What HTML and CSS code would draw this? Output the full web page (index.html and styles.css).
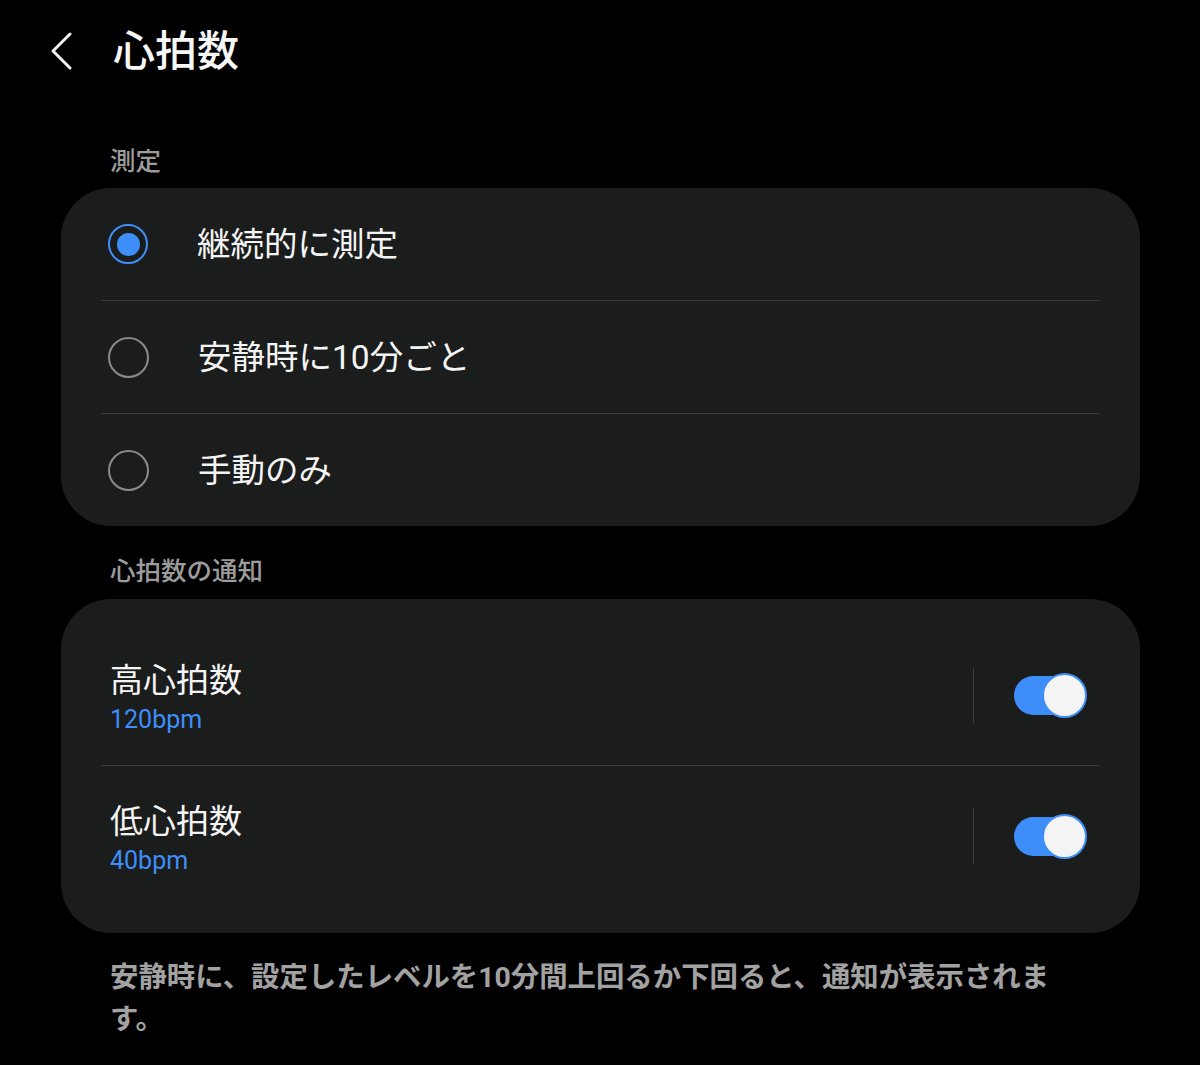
FILE: index.html
```html
<!DOCTYPE html>
<html lang="ja">
<head>
    <meta charset="UTF-8">
    <meta name="viewport" content="width=device-width, initial-scale=1.0">
    <title>心拍数</title>
    <link rel="stylesheet" href="styles.css">
</head>
<body>
    <div class="header">
        <a class="back" href="#">
            <svg width="24" height="40" viewBox="0 0 24 40">
                <polyline points="20,2 3,19 20,36" fill="none" stroke="#f2f2f2" stroke-width="3" stroke-linecap="round" stroke-linejoin="round"/>
            </svg>
        </a>
        <h1>心拍数</h1>
    </div>

    <div class="main">
        <h2 class="label first">測定</h2>
        <div class="card">
            <div class="radio-row">
                <span class="radio checked"></span>
                <span class="radio-text">継続的に測定</span>
            </div>
            <div class="divider"></div>
            <div class="radio-row">
                <span class="radio"></span>
                <span class="radio-text">安静時に10分ごと</span>
            </div>
            <div class="divider"></div>
            <div class="radio-row">
                <span class="radio"></span>
                <span class="radio-text">手動のみ</span>
            </div>
        </div>

        <h2 class="label">心拍数の通知</h2>
        <div class="card notify">
            <div class="switch-row">
                <div class="switch-text">
                    <div class="switch-title">高心拍数</div>
                    <div class="switch-value">120bpm</div>
                </div>
                <span class="vline"></span>
                <span class="toggle"><span class="track"></span><span class="thumb"></span></span>
            </div>
            <div class="divider"></div>
            <div class="switch-row">
                <div class="switch-text">
                    <div class="switch-title">低心拍数</div>
                    <div class="switch-value">40bpm</div>
                </div>
                <span class="vline"></span>
                <span class="toggle"><span class="track"></span><span class="thumb"></span></span>
            </div>
        </div>

        <p class="note">安静時に、設定したレベルを10分間上回るか下回ると、通知が表示されます。</p>
    </div>
</body>
</html>
```

FILE: styles.css
```css
body {
    font-family: Roboto, "Noto Sans CJK JP", "Noto Sans", sans-serif;
    background-color: #000;
    color: #f4f4f4;
    margin: 0;
    padding: 0;
}

.header {
    display: flex;
    align-items: center;
    height: 104px;
    padding-left: 50px;
}

.back {
    display: flex;
    width: 24px;
    height: 40px;
    margin-right: 39px;
}

.header h1 {
    margin: 0;
    font-size: 42px;
    font-weight: 500;
    line-height: 50px;
    color: #f7f7f7;
}

.main {
    padding: 0 60px 0 61px;
}

.label {
    margin: 28px 0 11px;
    padding-left: 49px;
    font-size: 25.5px;
    line-height: 34px;
    font-weight: 500;
    color: #9c9c9c;
}

.label.first {
    margin-top: 40px;
    margin-bottom: 10px;
}

.card {
    background-color: #1b1c1c;
    border-radius: 50px;
}

.divider {
    height: 1px;
    margin: 0 40px;
    background-color: #383939;
}

.radio-row {
    display: flex;
    align-items: center;
    height: 112px;
    padding-left: 47px;
}

.radio {
    width: 37px;
    height: 37px;
    border: 2px solid #8b8b8b;
    border-radius: 50%;
    margin-right: 49px;
    box-sizing: content-box;
    position: relative;
}

.radio.checked {
    border: 2.5px solid #3d8ef8;
    width: 36px;
    height: 36px;
}

.radio.checked::after {
    content: "";
    position: absolute;
    left: 6.5px;
    top: 6.5px;
    width: 23px;
    height: 23px;
    border-radius: 50%;
    background-color: #3d8ef8;
}

.radio-text {
    font-size: 33.5px;
    line-height: 44px;
    color: #f4f4f4;
    margin-top: 2px;
}

.notify {
    padding: 26px 0 27px;
}

.switch-row {
    display: flex;
    align-items: center;
    height: 140px;
    padding: 0 53px 0 49px;
}

.switch-text {
    flex: 1;
    margin-top: 6px;
}

.switch-title {
    font-size: 33px;
    line-height: 44px;
    color: #f4f4f4;
}

.switch-value {
    font-size: 25px;
    line-height: 34px;
    color: #3d8ef8;
}

.vline {
    width: 1px;
    height: 57px;
    background-color: #3a3b3b;
    margin-right: 40px;
}

.toggle {
    position: relative;
    width: 73px;
    height: 45px;
}

.toggle .track {
    position: absolute;
    left: 0;
    top: 3px;
    width: 70px;
    height: 39px;
    border-radius: 20px;
    background-color: #3d8ef8;
}

.toggle .thumb {
    position: absolute;
    right: 0;
    top: 0;
    width: 41px;
    height: 41px;
    border: 2px solid #3d8ef8;
    border-radius: 50%;
    background-color: #f4f4f4;
}

.note {
    margin: 24px 0 0;
    padding: 0 85px 0 49px;
    font-size: 28.4px;
    line-height: 42px;
    font-weight: 700;
    color: #a2a2a2;
}
```
